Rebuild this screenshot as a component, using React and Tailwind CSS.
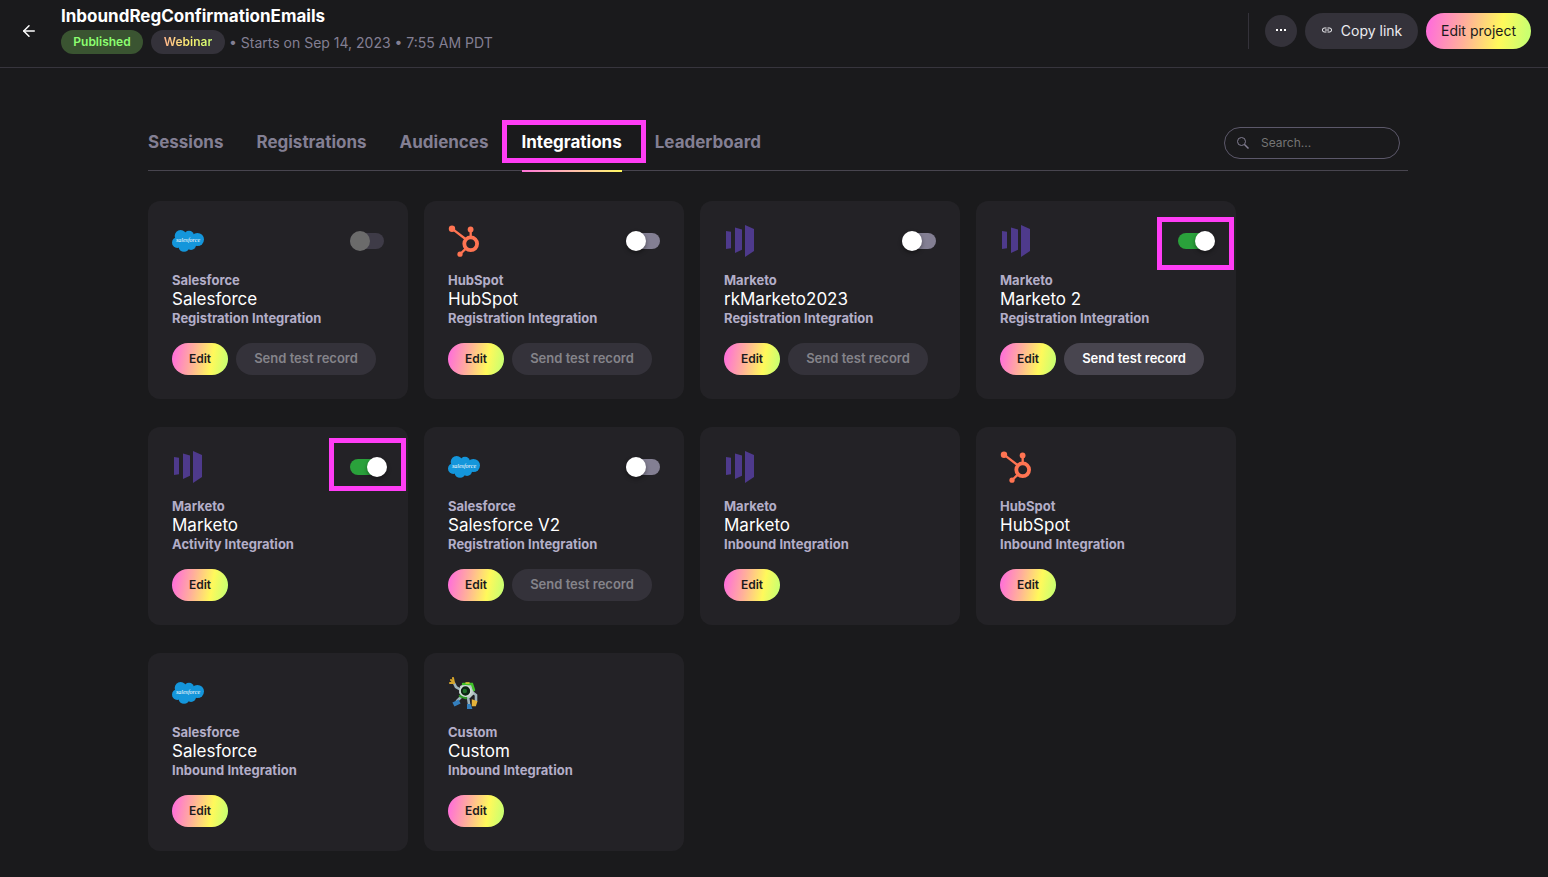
import React, { useState } from "react";
import { FiArrowLeft } from "react-icons/fi";
import { MdLink } from "react-icons/md";

const GRADIENT = "bg-[linear-gradient(100deg,#ff70d8_5%,#ffb199_38%,#fff95b_70%,#c9ff70_95%)]";

const TABS = ["Sessions", "Registrations", "Audiences", "Integrations", "Leaderboard"];

const INTEGRATIONS = [
  { id: 1, vendor: "Salesforce", name: "Salesforce", type: "Registration", toggle: "locked", test: "disabled" },
  { id: 2, vendor: "HubSpot", name: "HubSpot", type: "Registration", toggle: "off", test: "disabled" },
  { id: 3, vendor: "Marketo", name: "rkMarketo2023", type: "Registration", toggle: "off", test: "disabled" },
  { id: 4, vendor: "Marketo", name: "Marketo 2", type: "Registration", toggle: "on", test: "enabled", callout: "top-4" },
  { id: 5, vendor: "Marketo", name: "Marketo", type: "Activity", toggle: "on", callout: "top-[11px]" },
  { id: 6, vendor: "Salesforce", name: "Salesforce V2", type: "Registration", toggle: "off", test: "disabled" },
  { id: 7, vendor: "Marketo", name: "Marketo", type: "Inbound" },
  { id: 8, vendor: "HubSpot", name: "HubSpot", type: "Inbound" },
  { id: 9, vendor: "Salesforce", name: "Salesforce", type: "Inbound" },
  { id: 10, vendor: "Custom", name: "Custom", type: "Inbound" },
];

function SalesforceLogo() {
  return (
    <svg viewBox="0 0 32 32" className="size-8" aria-hidden="true">
      <g fill="#1496db">
        <circle cx="8.6" cy="11" r="5.9" />
        <circle cx="17" cy="10.8" r="5" />
        <circle cx="25.4" cy="14.5" r="6.6" />
        <circle cx="5.3" cy="17.6" r="5.3" />
        <circle cx="12" cy="21.4" r="5.4" />
        <circle cx="19" cy="20" r="5" />
        <rect x="7" y="10" width="18" height="10" />
      </g>
      <text
        x="16"
        y="17"
        textAnchor="middle"
        fill="#fff"
        className="font-['Liberation_Serif',serif] text-[6px] italic"
      >
        salesforce
      </text>
    </svg>
  );
}

function HubSpotLogo() {
  return (
    <svg viewBox="0 0 32 32" className="size-8" aria-hidden="true">
      <g fill="none" stroke="#ff7452">
        <circle cx="22.7" cy="18.8" r="6.4" strokeWidth="3.8" />
        <path d="M4 3.7 17.5 14M22.7 4.3V12M12 29.3l5.5-5.4" strokeWidth="2.3" />
      </g>
      <g fill="#ff7452">
        <circle cx="4" cy="3.7" r="3.2" />
        <circle cx="22.6" cy="4.4" r="2.9" />
        <circle cx="12" cy="29.2" r="2.6" />
      </g>
    </svg>
  );
}

function MarketoLogo() {
  return (
    <svg viewBox="0 0 32 32" className="size-8" fill="#4e3a8c" aria-hidden="true">
      <path d="M2 6l5 .8v16.4l-5 .9z" />
      <path d="M11 2.6l7 1.9v20.3L11 28z" />
      <path d="M21 0l9 4v22l-9 6z" />
    </svg>
  );
}

function CustomLogo() {
  return (
    <svg viewBox="0 0 32 32" className="size-8" fill="none" strokeLinecap="round" aria-hidden="true">
      <path d="M6 6l2 4 5 3M13 20l-4 4M20 20l1 7M23 14l5 4v6" stroke="#9fb3ba" strokeWidth="2.6" />
      <path d="M3 3l3 3M5 1l1 5M2 6l4 0" stroke="#d6a52c" strokeWidth="2" />
      <path d="M12 9l4-2 8 1 2 9-4 4-8-1-3-4z" fill="#b9cac6" />
      <path d="M15 7l9 0 2 6" stroke="#3fc229" strokeWidth="2.4" />
      <path d="M18 6l3 0" stroke="#e4cf3a" strokeWidth="1.5" />
      <path d="M12 19l6 2" stroke="#2f9a28" strokeWidth="2.4" />
      <circle cx="17.5" cy="14" r="5.4" fill="#0d2414" stroke="#d5e1dc" strokeWidth="1.4" />
      <circle cx="16.8" cy="14" r="2.2" fill="#1f6d2a" />
      <path d="M6 26l4-2 1 2-4 2z" fill="#347fbd" stroke="#347fbd" strokeWidth="2.4" />
      <path d="M20 28h2l1 3h-3z" fill="#347fbd" stroke="#347fbd" strokeWidth="2" />
      <path d="M25 24l3 1-1 3-2 0z" fill="#d99d25" stroke="#e3b23a" strokeWidth="2.4" />
    </svg>
  );
}

const LOGOS = {
  Salesforce: SalesforceLogo,
  HubSpot: HubSpotLogo,
  Marketo: MarketoLogo,
  Custom: CustomLogo,
};

function Toggle({ label, state }) {
  const [checked, setChecked] = useState(state === "on");

  return (
    <input
      type="checkbox"
      role="switch"
      aria-label={label}
      checked={checked}
      disabled={state === "locked"}
      onChange={(e) => setChecked(e.target.checked)}
      className="relative h-4 w-[34px] appearance-none rounded-full bg-[#837f93] before:absolute before:-top-0.5 before:left-0 before:size-5 before:rounded-full before:bg-white before:shadow-[0_2px_4px_rgba(0,0,0,0.4)] checked:bg-[#2aa13b] checked:before:left-[17px] disabled:bg-[#3e3b47] disabled:before:bg-[#6b6b6b] disabled:before:shadow-none"
    />
  );
}

function IntegrationCard({ item }) {
  const Logo = LOGOS[item.vendor];

  return (
    <article className="relative rounded-xl bg-[#232226] p-6">
      <div className="flex items-center justify-between">
        <Logo />
        {item.toggle && <Toggle label={`Enable ${item.name}`} state={item.toggle} />}
      </div>
      <p className="mt-[14px] text-[13px] leading-[18px] font-bold text-[#b3aec8]">{item.vendor}</p>
      <h2 className="text-[17px] leading-5 text-white">{item.name}</h2>
      <p className="text-[13px] leading-[18px] font-bold text-[#b3aec8]">{item.type} Integration</p>
      <div className="mt-4 flex gap-2">
        <button className={`h-8 w-14 rounded-full text-[12px] font-semibold text-[#1a1a1c] ${GRADIENT}`}>
          Edit
        </button>
        {item.test && (
          <button
            disabled={item.test === "disabled"}
            className="h-8 w-[140px] rounded-full bg-[#48454f] text-[13px] font-semibold text-white disabled:bg-[#34323a] disabled:text-[#85848a]"
          >
            Send test record
          </button>
        )}
      </div>
      {item.callout && (
        <span
          className={`pointer-events-none absolute right-0.5 h-[53px] w-[77px] border-5 border-[#ff3df5] ${item.callout}`}
        />
      )}
    </article>
  );
}

function Header() {
  return (
    <header className="flex h-[68px] items-start border-b border-[#37353d] px-[17px]">
      <a href="#projects" aria-label="Back" className="mt-[19px] flex size-6 items-center justify-center text-white">
        <FiArrowLeft className="size-[18px]" />
      </a>
      <div className="ml-5 pt-1">
        <h1 className="text-[17px] leading-6 font-bold text-white">InboundRegConfirmationEmails</h1>
        <div className="mt-0.5 flex items-center text-[14px] text-[#837f93]">
          <span className="flex h-6 w-[82px] items-center justify-center rounded-full bg-[#3a5431] text-[12px] font-semibold text-[#8cff70]">
            Published
          </span>
          <span className="ml-2 flex h-6 w-[74px] items-center justify-center rounded-full bg-[#34323a] text-[12px] font-semibold">
            <span className="bg-linear-to-r from-[#ffb58c] via-[#fff070] to-[#c9ff70] bg-clip-text text-transparent">
              Webinar
            </span>
          </span>
          <span className="ml-1">• Starts on Sep 14, 2023 • 7:55 AM PDT</span>
        </div>
      </div>
      <div className="mt-[13px] ml-auto flex h-9 items-center gap-2">
        <span className="mr-2 h-9 w-px bg-[#34323a]" />
        <button
          aria-label="More options"
          className="flex size-8 items-center justify-center rounded-full bg-[#34323a] text-white"
        >
          <svg viewBox="0 0 10 2" className="mb-0.5 h-0.5 w-2.5" fill="currentColor" aria-hidden="true">
            <rect width="2" height="2" />
            <rect x="4" width="2" height="2" />
            <rect x="8" width="2" height="2" />
          </svg>
        </button>
        <button className="flex h-9 w-[113px] items-center justify-center gap-2 rounded-full bg-[#34323a] pb-0.5 text-[14px] text-[#ececf0]">
          <MdLink className="size-3" />
          Copy link
        </button>
        <button className={`h-9 w-[105px] rounded-full pb-0.5 text-[14px] text-[#1a1a1c] ${GRADIENT}`}>
          Edit project
        </button>
      </div>
    </header>
  );
}

function App() {
  const [search, setSearch] = useState("");

  const visible = INTEGRATIONS.filter((item) => item.name.toLowerCase().includes(search.toLowerCase()));

  return (
    <div className="min-h-screen bg-[#1a1a1c] font-['Inter','Liberation_Sans',sans-serif]">
      <Header />

      <main className="pt-[59px] pr-[140px] pb-[26px] pl-[148px]">
        {/* Tabs */}
        <div className="flex items-start justify-between border-b border-[#48454f] pb-[11px]">
          <nav className="flex gap-[33px]">
            {TABS.map((tab) => {
              const active = tab === "Integrations";
              return (
                <a
                  key={tab}
                  href={`#${tab.toLowerCase()}`}
                  aria-current={active ? "page" : undefined}
                  className={`relative flex h-8 items-center text-[17px] font-bold ${
                    active ? "text-white" : "text-[#837f93]"
                  }`}
                >
                  {tab}
                  {active && (
                    <>
                      <span className="absolute inset-x-0 -bottom-[13px] h-0.5 bg-linear-to-r from-[#ff70d8] to-[#fff95b]" />
                      <span className="pointer-events-none absolute -top-[7px] -right-6 -left-5 h-[43px] border-5 border-[#ff3df5]" />
                    </>
                  )}
                </a>
              );
            })}
          </nav>
          <label className="mr-2 flex h-8 w-44 items-center gap-3 rounded-full border border-[#5c586a] px-3">
            <svg viewBox="0 0 12 12" className="size-3 shrink-0" fill="none" stroke="#837f93" aria-hidden="true">
              <circle cx="4.5" cy="4.5" r="4" />
              <path d="M7.5 7.5l4 4" strokeWidth="1.5" />
            </svg>
            <input
              type="search"
              aria-label="Search integrations"
              placeholder="Search..."
              value={search}
              onChange={(e) => setSearch(e.target.value)}
              className="w-full min-w-0 bg-transparent text-[12px] text-white outline-none placeholder:text-[#757575]"
            />
          </label>
        </div>

        {/* Integrations */}
        <div className="mt-[30px] grid grid-cols-[repeat(auto-fill,260px)] gap-x-4 gap-y-7">
          {visible.map((item) => (
            <IntegrationCard key={item.id} item={item} />
          ))}
        </div>
      </main>
    </div>
  );
}

export default App;
